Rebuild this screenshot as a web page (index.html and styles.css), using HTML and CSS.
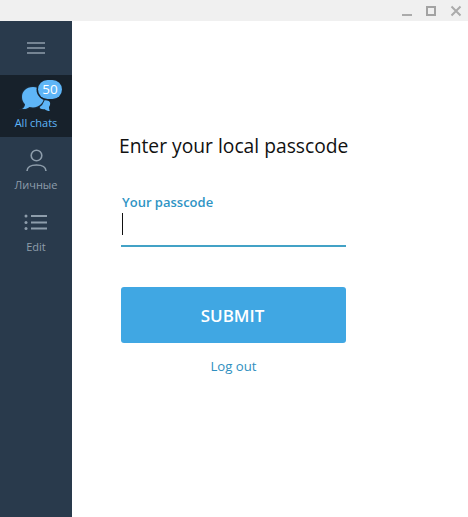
FILE: index.html
```html
<!DOCTYPE html>
<html lang="en">
<head>
<meta charset="UTF-8">
<meta name="viewport" content="width=device-width, initial-scale=1.0">
<title>Passcode</title>
<link rel="stylesheet" href="styles.css">
</head>
<body>
<div class="titlebar">
    <svg class="win-icon" width="12" height="12" viewBox="0 0 12 12"><rect x="2" y="9" width="10" height="2" fill="#ababab"/></svg>
    <svg class="win-icon" width="12" height="12" viewBox="0 0 12 12"><rect x="2" y="2" width="8" height="8" fill="none" stroke="#a3a3a3" stroke-width="2"/></svg>
    <svg class="win-icon" width="12" height="12" viewBox="0 0 12 12"><path d="M1.5 1.5l9 9M10.5 1.5l-9 9" stroke="#ababab" stroke-width="2" fill="none"/></svg>
</div>
<div class="window">
    <div class="sidebar">
        <div class="menu-btn">
            <svg width="18" height="12" viewBox="0 0 18 12"><path d="M0 1h18M0 6h18M0 11h18" stroke="#8e9dab" stroke-width="1.5" fill="none"/></svg>
        </div>
        <div class="tab tab-active">
            <div class="tab-icon">
                <svg class="chats-icon" width="40" height="32" viewBox="0 0 40 32">
                    <path d="M24 17c3-1 9-1 10 2.500.6 2.200-.5 3.500-1 4.500 0 1.500.3 3 .8 4-2 0-4-.8-5-1.800-2 .3-3.500 0-5-1z" fill="#5eb5f7"/>
                    <path d="M17 4C10 4 6 8.500 6 14c0 3 1.200 5.500 3 7.200 0 2-1.300 3.800-3 4.800 3 .4 6-.6 7.500-2 1.100.3 2.300.4 3.500.4 3.500 0 6-1 8-3L30 12C28 7 23 4 17 4z" fill="#1a2836" stroke="#1a2836" stroke-width="2.500"/>
                    <path d="M17 4C10 4 6 8.500 6 14c0 3 1.200 5.500 3 7.200 0 2-1.300 3.800-3 4.800 3 .4 6-.6 7.500-2 1.100.3 2.300.4 3.500.4 6.500 0 11-4.700 11-10.400S23.500 4 17 4z" fill="#5eb5f7"/>
                </svg>
                <span class="badge">50</span>
            </div>
            <span class="tab-label">All chats</span>
        </div>
        <div class="tab">
            <div class="tab-icon">
                <svg class="person-icon" width="24" height="24" viewBox="0 0 24 24"><circle cx="12.500" cy="7.500" r="5.300" fill="none" stroke="#8e9dab" stroke-width="1.600"/><path d="M3 23c0-3.500 3.500-6 9.500-6s9.500 2.500 9.500 6" fill="none" stroke="#8e9dab" stroke-width="1.600"/></svg>
            </div>
            <span class="tab-label">Личные</span>
        </div>
        <div class="tab">
            <div class="tab-icon">
                <svg class="list-icon" width="24" height="16" viewBox="0 0 24 16"><path d="M7 2h16M7 8.500h16M7 14.500h16" stroke="#8e9dab" stroke-width="1.800" fill="none"/><circle cx="2" cy="2" r="1.500" fill="#8e9dab"/><circle cx="2" cy="8.500" r="1.500" fill="#8e9dab"/><circle cx="2" cy="14.500" r="1.500" fill="#8e9dab"/></svg>
            </div>
            <span class="tab-label">Edit</span>
        </div>
    </div>
    <div class="main">
        <div class="form">
            <h1 class="title">Enter your local passcode</h1>
            <label class="field-label">Your passcode</label>
            <div class="field"><span class="caret"></span></div>
            <button class="submit">SUBMIT</button>
            <a class="logout">Log out</a>
        </div>
    </div>
</div>
</body>
</html>
```

FILE: styles.css
```css
html, body {
    margin: 0;
    padding: 0;
    height: 100%;
}
body {
    font-family: 'Open Sans', sans-serif;
    background-color: #fff;
    display: flex;
    flex-direction: column;
    overflow: hidden;
}
.titlebar {
    height: 21px;
    background-color: #f0f0f0;
    display: flex;
    justify-content: flex-end;
    align-items: center;
    gap: 13px;
    padding-right: 6px;
    flex: none;
}
.window {
    flex: 1;
    display: flex;
}
.sidebar {
    width: 72px;
    background-color: #293a4c;
    flex: none;
}
.menu-btn {
    height: 54px;
    display: flex;
    justify-content: center;
    align-items: center;
    padding-bottom: 1px;
    box-sizing: border-box;
}
.tab {
    height: 62px;
    display: flex;
    flex-direction: column;
    align-items: center;
}
.tab-active {
    background-color: #17212b;
}
.tab-icon {
    height: 40px;
    width: 72px;
    display: flex;
    justify-content: center;
    align-items: flex-end;
    position: relative;
}
.person-icon {
    margin-bottom: 5px;
}
.list-icon {
    margin-bottom: 9px;
}
.tab-label {
    font-size: 11px;
    line-height: 16px;
    color: #8e9dab;
}
.tab-active .tab-label {
    color: #5eb5f7;
}
.badge {
    position: absolute;
    top: 5px;
    left: 38px;
    width: 24px;
    height: 19px;
    border-radius: 10px;
    background-color: #5eb5f7;
    color: #fff;
    font-size: 13.5px;
    line-height: 19px;
    text-align: center;
    box-shadow: 0 0 0 1.5px #17212b;
}
.main {
    flex: 1;
    display: flex;
    padding: 111px 0 0 49px;
}
.form {
    width: 225px;
    display: flex;
    flex-direction: column;
}
.title {
    font-size: 19.25px;
    font-weight: 400;
    line-height: 27px;
    color: #111;
    margin: 0 0 0 -2px;
    white-space: nowrap;
}
.field-label {
    font-size: 13px;
    font-weight: 600;
    line-height: 18px;
    color: #2f94c4;
    margin: 34px 0 0 1px;
}
.field {
    border-bottom: 2px solid #43a2c6;
    margin-bottom: 40px;
    padding-top: 2px;
    height: 32px;
}
.caret {
    display: block;
    width: 1px;
    height: 22px;
    margin-left: 1px;
    background-color: #111;
}
.submit {
    height: 56px;
    border: none;
    border-radius: 3px;
    background-color: #40a7e3;
    color: #fff;
    font-family: inherit;
    font-size: 17px;
    font-weight: 600;
    padding: 0 2px 0 0;
}
.logout {
    font-size: 13.2px;
    line-height: 20px;
    color: #2f8fc0;
    text-align: center;
    margin-top: 13px;
}
```
